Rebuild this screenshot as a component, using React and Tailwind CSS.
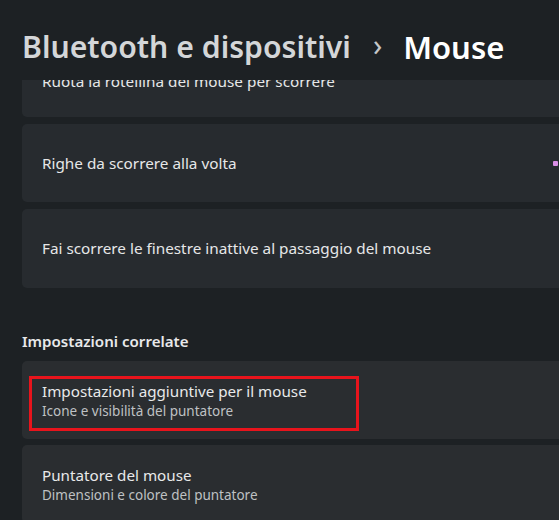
export default function App() {
  return (
    <div className="w-[559px] h-[520px] overflow-hidden bg-[#1d2124] flex flex-col font-['Noto_Sans',sans-serif]">
      {/* page title / breadcrumb */}
      <header className="h-[80px] shrink-0 flex items-center pl-[22px] pt-[14px] relative z-10 bg-[#1d2124]">
        <span className="text-[30.2px] font-semibold text-[#d4d6d8]">Bluetooth e dispositivi</span>
        <span className="text-[30px] leading-none text-[#c4c6c8] ml-[22px] mr-[21px] -mt-[4px]">›</span>
        <span className="text-[31px] font-semibold text-white">Mouse</span>
      </header>

      <div className="flex-1 overflow-hidden pl-[22px]">
        <div className="-mt-[41px] flex flex-col gap-[7px]">
          <div className="h-[78px] rounded-l-[5px] bg-[#272b2f] flex items-center pl-[20px] pt-[7px]">
            <span className="text-[15.3px] text-[#e6e7e8]">Ruota la rotellina del mouse per scorrere</span>
          </div>
          <div className="h-[78px] rounded-l-[5px] bg-[#272b2f] flex items-center pl-[20px]">
            <span className="text-[15.3px] text-[#e6e7e8]">Righe da scorrere alla volta</span>
            <span className="ml-auto mr-[1px] w-[5px] h-[5px] rounded-[1px] bg-[#d98fe6]" />
          </div>
          <div className="h-[79px] rounded-l-[5px] bg-[#272b2f] flex items-center pl-[20px]">
            <span className="text-[15.3px] text-[#e6e7e8]">Fai scorrere le finestre inattive al passaggio del mouse</span>
          </div>
        </div>

        <h2 className="mt-[41px] mb-[8px] leading-[24px] text-[15.1px] font-semibold text-[#e8e9ea]">Impostazioni correlate</h2>

        <div className="flex flex-col gap-[6px]">
          <div className="relative h-[78px] rounded-l-[5px] bg-[#2a2d30] flex flex-col justify-center pl-[20px]">
            <span className="text-[15.2px] leading-[22px] text-[#e8e9ea]">Impostazioni aggiuntive per il mouse</span>
            <span className="text-[13.5px] leading-[18px] text-[#bfc1c3]">Icone e visibilità del puntatore</span>
            <div className="absolute left-[7px] top-[15px] w-[330px] h-[55px] border-[3px] border-[#e8141c]" />
          </div>
          <div className="h-[78px] rounded-l-[5px] bg-[#2a2d30] flex flex-col justify-center pl-[20px]">
            <span className="text-[15.2px] leading-[22px] text-[#e8e9ea]">Puntatore del mouse</span>
            <span className="text-[13.5px] leading-[18px] text-[#bfc1c3]">Dimensioni e colore del puntatore</span>
          </div>
        </div>
      </div>
    </div>
  );
}
